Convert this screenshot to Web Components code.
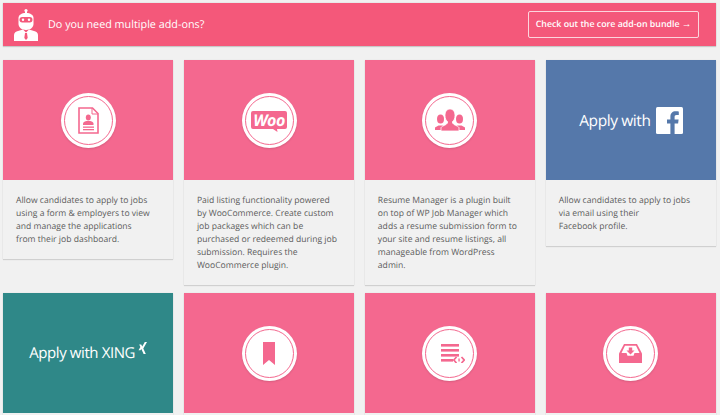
<!DOCTYPE html>
<html lang="en">
<head>
<meta charset="utf-8">
<title>Add-ons</title>
<style>
    html, body { margin: 0; background: #f1f1f1; overflow: hidden; }
    body { font-family: "Open Sans", "Liberation Sans", sans-serif; text-rendering: geometricPrecision; }
</style>
</head>
<body>
<addon-page>
    <addon-banner href="#" action="Check out the core add-on bundle">
        <svg slot="logo" width="24" height="32" viewBox="0 0 24 32">
            <circle cx="12" cy="1.6" r="1.6" fill="#fff"/>
            <rect x="11" y="2" width="2" height="3" fill="#fff"/>
            <path d="M4.5 9c0-3 3-5 7.500-5s7.500 2 7.500 5v6c0 3-3 6-7.500 6s-7.500-3-7.500-6z" fill="#fff"/>
            <rect x="5.500" y="8" width="13" height="5.500" rx="2.700" fill="#f4587a"/>
            <circle cx="9" cy="10.700" r="1.200" fill="#fff"/>
            <circle cx="15" cy="10.700" r="1.200" fill="#fff"/>
            <path d="M0 32v-6c0-2.500 2-3.500 4-4l5-1.500 3 3 3-3 5 1.500c2 .5 4 1.500 4 4v6z" fill="#fff"/>
            <path d="M11 24h2l.7 5-1.700 2-1.700-2z" fill="#f4587a"/>
        </svg>
        Do you need multiple add-ons?
    </addon-banner>
    <addon-grid>
        <addon-card>
            <ring-badge slot="art">
                <svg width="21" height="27" viewBox="0 0 21 27">
                    <path d="M1 1h13.500L20 6.500V26H1z" fill="none" stroke="#f4688f" stroke-width="1.600"/>
                    <path d="M14 1v6h6" fill="none" stroke="#f4688f" stroke-width="1"/>
                    <ellipse cx="10.300" cy="10.500" rx="2.500" ry="3" fill="#f4688f"/>
                    <path d="M5 18v-1.500c0-1.300 2.500-2.300 3.500-2.500h3.600c1 .2 3.400 1.200 3.400 2.500V18z" fill="#f4688f"/>
                    <rect x="5" y="19.500" width="11" height="1.300" fill="#f4688f"/>
                    <rect x="5" y="22" width="11" height="1.300" fill="#f4688f"/>
                </svg>
            </ring-badge>
            Allow candidates to apply to jobs using a form &amp; employers to view and manage the applications<br>from their job dashboard.
        </addon-card>
        <addon-card>
            <ring-badge slot="art">
                <svg width="36" height="28" viewBox="0 -5 36 28">
                    <path d="M2 0h32a2 2 0 0 1 2 2v14a2 2 0 0 1-2 2H26l.5 3-4.500-3H2a2 2 0 0 1-2-2V2a2 2 0 0 1 2-2z" fill="#f4688f"/>
                    <text x="18" y="14.700" text-anchor="middle" font-family="Open Sans" font-size="16" font-weight="700" font-style="italic" fill="#fff" letter-spacing="-.5">Woo</text>
                </svg>
            </ring-badge>
            Paid listing functionality powered by WooCommerce. Create custom job packages which can be purchased or redeemed during job submission. Requires the WooCommerce plugin.
        </addon-card>
        <addon-card>
            <ring-badge slot="art">
                <svg width="30" height="22" viewBox="0 0 30 22">
                    <ellipse cx="5.500" cy="10" rx="3.500" ry="4.500" fill="#f4688f"/>
                    <path d="M0 21v-2.500l3.500-2h4l2 1-2 2-.5 1.500z" fill="#f4688f"/>
                    <ellipse cx="24.500" cy="10" rx="3.500" ry="4.500" fill="#f4688f"/>
                    <path d="M30 21v-2.500l-3.500-2h-4l-2 1 2 2 .5 1.500z" fill="#f4688f"/>
                    <path d="M6 22v-3c0-1 1-1.500 5-3.500l1.500-1.500v-1.500c-1.500-1-2.500-3-2.500-6C10 2.500 12 0 15 0s5 2.500 5 6.500c0 3-1 5-2.500 6V14l1.500 1.500c4 2 5 2.500 5 3.500v3z" fill="#f4688f" stroke="#fff" stroke-width=".8"/>
                </svg>
            </ring-badge>
            Resume Manager is a plugin built on top of WP Job Manager which adds a resume submission form to your site and resume listings, all manageable from WordPress admin.
        </addon-card>
        <addon-card tone="facebook">
            <brand-mark slot="art">
                Apply with
                <svg width="27" height="27" viewBox="0 0 27 27">
                    <rect width="27" height="27" rx="1.500" fill="#fff"/>
                    <path d="M18.600 27V16.600h3.500l.5-4h-4v-2.600c0-1.200.3-2 2-2h2.200V4.400c-.4 0-1.700-.2-3.200-.2-3.100 0-5.200 1.900-5.200 5.400v3H11v4h3.400V27z" fill="#5578aa"/>
                </svg>
            </brand-mark>
            Allow candidates to apply to jobs via email using their<br>Facebook&nbsp;profile.
        </addon-card>
        <addon-card tone="xing">
            <brand-mark slot="art" style="--mark-size: 15px">
                Apply with XING
                <svg style="margin:-10px 0 0 -2px" width="9" height="12" viewBox="0 0 9 12">
                    <path d="M6.800 0H9L5.300 6.500 7.800 12H5.600L3.100 6.500zM1.200 2.500h2l1.300 2.500-2 3.300H.5l1.900-3.300z" fill="#fff"/>
                </svg>
            </brand-mark>
        </addon-card>
        <addon-card>
            <ring-badge slot="art">
                <svg width="12" height="23" viewBox="0 0 12 23">
                    <path d="M0 0h12v23l-6-5-6 5z" fill="#f4688f"/>
                </svg>
            </ring-badge>
        </addon-card>
        <addon-card>
            <ring-badge slot="art">
                <svg width="30" height="19" viewBox="-6 0 30 19">
                    <rect width="18" height="2.600" fill="#f4688f"/>
                    <rect y="5" width="18" height="2.600" fill="#f4688f"/>
                    <rect y="10" width="18" height="2.600" fill="#f4688f"/>
                    <rect y="15" width="12" height="2.600" fill="#f4688f"/>
                    <path d="M15.500 13 12.800 16l2.700 3M20.500 13l2.700 3-2.700 3" fill="none" stroke="#f4688f" stroke-width="1.700"/>
                    <rect x="17.400" y="14.500" width="1.300" height="3" fill="#f4688f"/>
                </svg>
            </ring-badge>
        </addon-card>
        <addon-card>
            <ring-badge slot="art">
                <svg width="23" height="19" viewBox="0 0 23 19">
                    <path d="M5 0h13l5 9.500V19H0V9.500z" fill="#f4688f"/>
                    <path d="M6 1.800h11L20.500 9h-5l-1 2.800h-6L7.500 9h-5z" fill="#fff"/>
                    <path d="M9.800 3.500h3.400v3h2.300l-4 4-4-4h2.300z" fill="#f4688f"/>
                </svg>
            </ring-badge>
        </addon-card>
    </addon-grid>
</addon-page>

<script>
(function () {
    class AddonPage extends HTMLElement {
        connectedCallback() {
            this.attachShadow({ mode: 'open' });
            this.shadowRoot.innerHTML = `
                <style>
                    :host {
                        display: grid;
                        gap: 14px;
                        padding: 3px 4px 0 3px;
                        color: #5c5c5c;
                        font-family: "Open Sans", "Liberation Sans", sans-serif;
                    }
                </style>
                <slot></slot>
            `;
        }
    }

    class AddonBanner extends HTMLElement {
        connectedCallback() {
            const action = this.getAttribute('action') || '';
            const href = this.getAttribute('href') || '#';

            this.attachShadow({ mode: 'open' });
            this.shadowRoot.innerHTML = `
                <style>
                    :host {
                        display: flex;
                        align-items: center;
                        gap: 10px;
                        height: 43px;
                        padding: 0 17px 0 11px;
                        box-sizing: border-box;
                        background: #f4587a;
                        color: #fff;
                        font-size: 10.8px;
                        box-shadow: 0 1px 1px rgba(0, 0, 0, 0.14), 0 0 1px rgba(0, 0, 0, 0.2);
                    }
                    .title {
                        flex: 1;
                    }
                    ::slotted(svg) {
                        display: block;
                        flex: none;
                    }
                    a {
                        display: block;
                        width: 171px;
                        height: 27px;
                        box-sizing: border-box;
                        border: 1px solid rgba(255, 255, 255, 0.75);
                        border-radius: 2px;
                        color: #fff;
                        font-size: 8.8px;
                        font-weight: 600;
                        line-height: 25px;
                        text-align: center;
                        text-decoration: none;
                        white-space: nowrap;
                    }
                    .arrow {
                        font-family: "Liberation Sans", sans-serif;
                        font-size: 9.5px;
                    }
                </style>
                <slot name="logo"></slot>
                <span class="title"><slot></slot></span>
                <a href="${href}">${action} <span class="arrow">→</span></a>
            `;
        }
    }

    class AddonGrid extends HTMLElement {
        connectedCallback() {
            this.attachShadow({ mode: 'open' });
            this.shadowRoot.innerHTML = `
                <style>
                    :host {
                        display: grid;
                        grid-template-columns: repeat(4, minmax(0, 1fr));
                        column-gap: 10.7px;
                        row-gap: 8px;
                        align-items: start;
                    }
                </style>
                <slot></slot>
            `;
        }
    }

    class AddonCard extends HTMLElement {
        connectedCallback() {
            const tones = { facebook: '#5578aa', xing: '#2f8888' };
            const tone = tones[this.getAttribute('tone')] || '#f4688f';

            this.attachShadow({ mode: 'open' });
            this.shadowRoot.innerHTML = `
                <style>
                    :host {
                        display: block;
                        background: #f1f1f1;
                        box-shadow: 0 1px 1px rgba(0, 0, 0, 0.12), 0 0 1px rgba(0, 0, 0, 0.1);
                    }
                    .art {
                        display: grid;
                        place-items: center;
                        height: 120px;
                        background: ${tone};
                    }
                    .text {
                        padding: 14px 13px 13px;
                        font-size: 8.6px;
                        line-height: 13px;
                    }
                </style>
                <div class="art"><slot name="art"></slot></div>
                <div class="text"><slot></slot></div>
            `;
        }
    }

    class RingBadge extends HTMLElement {
        connectedCallback() {
            this.attachShadow({ mode: 'open' });
            this.shadowRoot.innerHTML = `
                <style>
                    :host {
                        display: block;
                        width: 55px;
                        height: 55px;
                        padding: 3px;
                        box-sizing: border-box;
                        border-radius: 50%;
                        background: #fff;
                        box-shadow: 0 1px 2px rgba(0, 0, 0, 0.12);
                    }
                    .inner {
                        display: grid;
                        place-items: center;
                        height: 100%;
                        box-sizing: border-box;
                        border: 1.8px solid #f4688f;
                        border-radius: 50%;
                    }
                    ::slotted(svg) {
                        display: block;
                    }
                </style>
                <div class="inner"><slot></slot></div>
            `;
        }
    }

    class BrandMark extends HTMLElement {
        connectedCallback() {
            this.attachShadow({ mode: 'open' });
            this.shadowRoot.innerHTML = `
                <style>
                    :host {
                        display: flex;
                        align-items: center;
                        gap: 5px;
                        color: #fff;
                        font-size: var(--mark-size, 15.5px);
                        letter-spacing: -0.4px;
                        white-space: nowrap;
                    }
                    ::slotted(svg) {
                        display: block;
                        flex: none;
                    }
                </style>
                <slot></slot>
            `;
        }
    }

    customElements.define('addon-page', AddonPage);
    customElements.define('addon-banner', AddonBanner);
    customElements.define('addon-grid', AddonGrid);
    customElements.define('addon-card', AddonCard);
    customElements.define('ring-badge', RingBadge);
    customElements.define('brand-mark', BrandMark);
})();
</script>
</body>
</html>
